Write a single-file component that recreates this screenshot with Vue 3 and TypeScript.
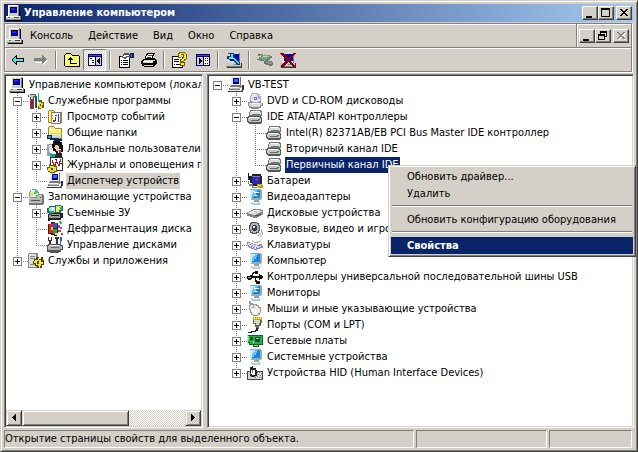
<script setup lang="ts">
import { ref } from 'vue'

type Layer = [fill: string, d: string]
type Guide = 'line' | 'tee' | 'elbow' | 'blank' | 'root'
interface Node {
  label: string
  icon: string
  guides: Guide[]
  expander?: '+' | '-'
  state?: 'inactive' | 'active'
}

const computer: Layer[] = [
  ['#808080', 'M2 0h11v11H2z'],
  ['#fff', 'M2 0h10v1H3v10H2z'],
  ['#d4d0c8', 'M3 1h9v10H3z'],
  ['#000', 'M4 2h7v6H4zM13 1h1v10h-1z'],
  ['#00b', 'M5 3h6v5H5z'],
  ['#22f', 'M5 3h4v2H5z'],
  ['#000', 'M1 15h14v1H1zM15 12h1v4h-1z'],
  ['#808080', 'M0 11h15v4H0z'],
  ['#d8d4cc', 'M0 11h14v3H0z'],
  ['#fff', 'M0 11h14v1H0z'],
  ['#0a0', 'M2 12h2v1H2z'],
  ['#404040', 'M8 12h5v1H8z'],
]
const drive: Layer[] = [
  ['#777', 'M3 1h11v1h1v5h-1v1H3V7H2V3h1z'],
  ['#ddd', 'M4 2h9v1h1v3H3V3h1z'],
  ['#fff', 'M4 2h8v1H4z'],
  ['#777', 'M5 5h8v1H5z'],
  ['#555', 'M1 7h13v1h1v6h-1v1H2v-1H1v-1H0V8h1z'],
  ['#c4c4c4', 'M2 8h11v1h1v4H2v-1H1V9h1z'],
  ['#fff', 'M2 8h10v1H2z'],
  ['#666', 'M4 11h8v1H4z'],
  ['#0b0', 'M11 10h2v1h-2z'],
]
const screen: Layer[] = [
  ['#9ab', 'M3 0h11v1h1v9h-1v1H4v-1H3z'],
  ['#d6e8f4', 'M3 1h2v9H3z'],
  ['#1686dc', 'M5 1h8v8H5z'],
  ['#63c4f6', 'M5 1h6v1h-1v2H9v2H7v2H5z'],
  ['#b8e8ff', 'M5 1h3v2H6v2H5z'],
  ['#8aa', 'M7 11h5v2H7z'],
  ['#bccad4', 'M4 13h10v1h-1v2H5v-1H4z'],
  ['#eef4f8', 'M5 13h7v1H5z'],
]
const toolbarPc: Layer[] = [
  ['#808080', 'M2 1h12v10H2z'],
  ['#e0ddd6', 'M2 1h11v10H2z'],
  ['#0000b8', 'M4 2h9v7H4z'],
  ['#333', 'M1 15h14v-4h1v5H1z'],
  ['#c8c8c0', 'M0 11h15v4H0z'],
  ['#808080', 'M8 12h5v1H8zM0 14h15v1H0z'],
]
const folder: Layer[] = [
  ['#a08820', 'M1 2h1V1h5v1h1v1h7v11H1z'],
  ['#f7ee7b', 'M2 2h5v1h1v1h6v9H2z'],
  ['#fffbc0', 'M2 4h12v1H3v8H2z'],
]

const icons: Record<string, Layer[]> = {
  computer,
  drive,
  screen,
  back: [
    ['#000', 'M6 3h1v3h7v4H7v3H6v-1H5v-1H4v-1H3V9H2V7h1V6h1V5h1V4h1z'],
    ['#4fe3ee', 'M6 5v2h7v2H6v2H5v-1H4V9H3V7h1V6h1V5z'],
  ],
  forward: [
    ['#fff', 'M10 4h1v1h1v1h1v1h1v1h1v1h-1v1h-1v1h-1v1h-1v1h-1v-2H2v-1h8z'],
    ['#808080', 'M9 3h1v1h1v1h1v1h1v1h1v1h-1v1h-1v1h-1v1h-1v1H9v-3H1V6h8z'],
  ],
  up: [
    ['#000', 'M1 2h1V1h5v1h1v1h7v1h1v11H1v-1H0V3h1z'],
    ['#ffff73', 'M2 2h5v1h1v1h7v10H1V3h1z'],
    ['#000', 'M6 5h1v1h1v1h1v1H7v3h6v1H6V8H4V7h1V6h1z'],
  ],
  panelLeft: [
    ['#000080', 'M1 2h14v12H1z'],
    ['#4848c8', 'M2 3h12v1H2z'],
    ['#fff', 'M2 5h6v8H2z'],
    ['#d4d0c8', 'M9 5h5v8H9z'],
    ['#000', 'M3 6h2v1H3zM5 8h2v1H5zM5 10h2v1H5zM12 6h1v6h-1v-1h-1v-1h-1V8h1V7h1z'],
  ],
  panelRight: [
    ['#000080', 'M1 2h14v12H1z'],
    ['#4848c8', 'M2 3h12v1H2z'],
    ['#d4d0c8', 'M2 5h6v8H2z'],
    ['#fff', 'M9 5h5v8H9z'],
    ['#000', 'M4 6h1v1h1v1h1v2H6v1H5v1H4z'],
    ['#000080', 'M10 6h1v1h-1zM12 6h1v1h-1zM10 8h1v1h-1zM12 8h1v1h-1zM10 11h1v1h-1zM12 11h1v1h-1z'],
  ],
  properties: [
    ['#000', 'M1 4h4V3h7v13H1z'],
    ['#fff', 'M2 5h9v10H2z'],
    ['#000', 'M3 8h1v1H3zM5 8h5v1H5zM3 10h1v1H3zM5 10h5v1H5zM3 12h1v1H3zM5 12h5v1H5z'],
    ['#555', 'M3 4h2V2h1V1h5v1h2v4h-2V5H9v1H8v1H6V6H4z'],
    ['#fff', 'M5 4h1V3h5v1H8v1H5z'],
    ['#0a246a', 'M12 1h4v5h-4z'],
    ['#4472c8', 'M13 2h1v3h-1z'],
  ],
  print: [
    ['#000', 'M6 1h8v1h-1v2h-1v2h2v1h1v1h1v4h-1v1h-1v1h-1v1H3v-1H1v-2H0V9h1V8h1V7h2V4h1V2h1z'],
    ['#fff', 'M7 2h5v1h-1v3H5V4h1V3h1z'],
    ['#444', 'M7 3h4v1H7zM6 5h4v1H6z'],
    ['#d4d0c8', 'M3 8h10v1H3zM2 10h10v1H2zM3 13h9v1H3z'],
    ['#fff', 'M2 9h10v1H2zM13 8h1v1h-1z'],
    ['#ffff40', 'M9 10h2v1H9z'],
    ['#000', 'M1 11h12v1H1z'],
  ],
  help: [
    ['#000', 'M0 4h8v1h3v11H0z'],
    ['#fff', 'M1 5h9v10H1z'],
    ['#000', 'M2 7h5v1H2zM2 9h5v1H2zM2 12h1v1H2zM4 12h4v1H4z'],
    ['#6b6300', 'M7 0h6v1h1v1h1v5h-1v1h-1v1h-1v1H8V7h2V6h1V3H9v3H6V1h1z'],
    ['#ffec28', 'M8 1h5v1h1v5h-2v2H9V8h1V7h1V6h1V2H9v3H7V2h1z'],
    ['#6b6300', 'M8 10h5v4H8z'],
    ['#ffec28', 'M9 11h3v2H9z'],
  ],
  scan: [
    ...toolbarPc,
    ['#063f66', 'M2 1h6v1h1v4h1v1h1v1h1v1h1v1h1v3h-3v-1h-1v-1H9v-1H8V9H7V8H3V7H1V4h3V2H2z'],
    ['#62d8ff', 'M5 2h2v4h2v1h1v1h1v1h1v1h1v2h-1v-1h-1v-1h-1V9H9V8H8V7H3V5h2z'],
    ['#fff', 'M6 5h1v1h1v1H7V6H6z'],
  ],
  uninstall: [
    ['#6a7468', 'M1 2h5v1h7v1h2v2h-2v2h-2v1h4v1h1v3h-1v1h-3v-1H9v-1H7V9H3V8H0V7h2V5h2V4H1z'],
    ['#75a67a', 'M2 2h4v1h6v1h2v1h-2v2H9v1H5V7H3V5h2V4H2z'],
    ['#c8d8c4', 'M6 4h5v1H6z'],
    ['#9a9688', 'M9 10h6v2h-4v-1H9zM7 8h3v1H7z'],
    ['#a33', 'M1 2h2v1H1z'],
  ],
  remove: [
    ...toolbarPc,
    ['#880010', 'M0 1h3l5 5 5-5h3l-6 7 5 6v1h-2l-5-5-5 5H1v-2l5-5z'],
  ],
  tools: [
    ['#555', 'M0 2h2V1h6v2h1v2H8V4H6v12H2V4H0z'],
    ['#c8d0d0', 'M1 2h6v1H5v3H3V4H1z'],
    ['#c01020', 'M3 7h2v8H3z'],
    ['#064', 'M7 4h2v11H7z'],
    ['#18c0b8', 'M10 0h1v9h-1z'],
    ['#6b5a00', 'M11 7h3v2h2v6h-3v1h-3v-5h1z'],
    ['#f5d638', 'M11 9h2v1h2v2h-1v3h-3v-2h-1v-2h1z'],
    ['#554400', 'M12 11h1v2h-1z'],
  ],
  events: [
    ...folder,
    ['#777', 'M4 3h10v12H4z'],
    ['#fff', 'M5 4h8v10H5z'],
    ['#c02020', 'M8 6h2v1H8zM6 11h2v2H6z'],
    ['#3030c0', 'M11 5h1v8h-1zM8 8h1v4H8z'],
    ['#c89020', 'M4 3h1v12H4zM5 6h1v1H5zM5 9h1v1H5z'],
  ],
  shared: [
    ...folder,
    ['#d8d060', 'M3 8h12v1H3z'],
    ['#c6d8e8', 'M5 10h7v1h2v2H5z'],
    ['#0b2258', 'M0 10h5v3h7v1h3v2H7v-1H3v-1H0z'],
    ['#5c86bd', 'M1 11h3v2H1z'],
  ],
  users: [
    ['#9aa0a0', 'M0 3h7v12H0z'],
    ['#d8dcd8', 'M2 4h5v7H2z'],
    ['#111', 'M6 0h7v1h2v3h1v7h-2V8h-3v4H8v-2H6V7H5V3h1z'],
    ['#f1c8a8', 'M8 4h3v1h1v5H9V8H8V7H7V6h1z'],
    ['#fff', 'M3 9h3v2h3v2H5v-1H3z'],
    ['#08a5a0', 'M3 13h10v3H3z'],
    ['#222', 'M9 12h6v4H8v-2h1z'],
    ['#d02030', 'M12 9h2v3h-2z'],
  ],
  logs: [
    ['#333', 'M3 0h13v14H3z'],
    ['#fff', 'M4 1h11v12H4z'],
    ['#c01818', 'M5 3h1v2h1v2h1V5h1V3h1v2h1v2h1V4h1V2h1v3h-1v4h-2V7h-1V6H9v3H7V7H6V6H5z'],
    ['#2020c0', 'M5 8h2v1H5zM8 2h2v1H8zM12 6h3v1h-3z'],
    ['#6b5a00', 'M2 7h2v1h2V7h2v2h2v6H8v1H3v-1H1v-2H0v-3h2z'],
    ['#f2dd38', 'M3 9h4v1h2v4H7v1H3v-1H1v-3h2z'],
    ['#443600', 'M4 11h2v2H4z'],
  ],
  deviceManager: [
    ['#777', 'M3 0h10v9H3z'],
    ['#e8e8e8', 'M3 0h9v8H3z'],
    ['#000070', 'M5 1h6v6H5z'],
    ['#2870ff', 'M6 2h4v3H6z'],
    ['#333', 'M0 14h12v1H0zM14 8h2v5h-2z'],
    ['#777', 'M2 9h12v1h-1v1h-1v2H1v-2h1z'],
    ['#b8c0c0', 'M2 10h10v2H2z'],
    ['#f4f4f4', 'M2 10h9v1H2zM1 13h10v1H1z'],
    ['#555', 'M13 13h2v2h-3v-1h1z'],
  ],
  storage: [
    ['#777', 'M1 5h14v1h1v9h-1v1H1z'],
    ['#b8b8b4', 'M1 6h13v8H1z'],
    ['#f0f0ea', 'M1 6h12v1H1z'],
    ['#555', 'M3 11h9v1H3z'],
    ['#8a9a94', 'M2 1h2V0h4v1h2v2h1v4H9v2H3V7H1V3h1z'],
    ['#d8efe8', 'M3 1h5v1h2v4H8v2H3V6H2V3h1z'],
    ['#39cf48', 'M7 1h2v1h1v2H8v1H6V3h1z'],
    ['#f0dc30', 'M2 4h3v2H3v1H2z'],
    ['#fff', 'M5 4h1v1H5z'],
    ['#0a0', 'M12 8h1v1h-1z'],
  ],
  removable: [
    ['#222', 'M2 7h12v1h2v5h-2v2H3v1H1V9h1z'],
    ['#9a9a94', 'M2 9h11v4H2z'],
    ['#111', 'M4 10h8v1H4z'],
    ['#276b70', 'M2 1h6V0h6v1h2v5h-2v2H5v2H2V8H0V3h2z'],
    ['#abecd8', 'M3 2h5v5H4V6H2V3h1z'],
    ['#e7e85a', 'M9 1h5v1h1v3h-3v2H9z'],
    ['#17be55', 'M3 6h4v2H3zM13 2h2v3h-2z'],
    ['#fff', 'M5 3h2v2H5zM10 3h2v1h-2z'],
  ],
  defrag: [
    ['#611', 'M1 3h3V1h4v1h3v10h-1v3H7v-1H4v-1H1z'],
    ['#d02c28', 'M2 3h4v9H2z'],
    ['#2858d0', 'M6 2h4v5H6z'],
    ['#18a848', 'M6 8h4v5H6z'],
    ['#f0d030', 'M4 6h2v3H4zM8 12h2v2H8z'],
    ['#b040d0', 'M11 4h2v2h2v2h-2V7h-2z'],
    ['#30bc50', 'M12 0h2v1h1v2h-2V2h-1z'],
    ['#d03838', 'M11 9h3v2h-3zM14 12h2v2h-2z'],
  ],
  diskManagement: [
    ['#333', 'M1 0h1v3h2V0h1v4H4v5H2V4H1zM8 0h4v2h-1v7H9V2H8z'],
    ['#1565c8', 'M13 0h2v4h-1v5h-1z'],
    ['#555', 'M1 7h13v1h2v5h-2v2h-2v1H3v-1H0V8h1z'],
    ['#b4b4ae', 'M2 8h11v1h2v3h-2v1H1V9h1z'],
    ['#eee', 'M2 8h10v1H2z'],
    ['#666', 'M4 10h8v1H4z'],
  ],
  services: [
    ['#888', 'M1 0h9v15H0V1h1z'],
    ['#dededa', 'M1 1h7v13H1z'],
    ['#888', 'M2 3h5v1H2zM2 5h5v1H2zM2 11h5v1H2z'],
    ['#4e4500', 'M6 6h2V4h3v2h2V4h2v3h1v5h-2v3h-2v-2h-1v2H9v-2H7v-2H5V8h1z'],
    ['#f2e24a', 'M7 7h3V5h1v2h2v2h2v2h-2v2h-3v-1H8v-2H6V8h1z'],
    ['#554600', 'M9 8h2v3H9z'],
  ],
  optical: [
    ['#888', 'M1 9h2V8h11v2h2v3h-2v2h-2v1H4v-1H2v-2H1z'],
    ['#d8dadd', 'M2 10h13v2h-2v2H4v-1H2z'],
    ['#fff', 'M3 10h9v1H3z'],
    ['#a9a9c0', 'M5 0h6v1h2v2h1v6h-2v1H5V9H4V8H3V3h1V1h1z'],
    ['#e5e7f5', 'M5 1h6v1h2v6h-2v1H6V8H4V3h1z'],
    ['#b9a6ed', 'M10 2h2v1h1v3h-3V5h1V4h-1z'],
    ['#77a', 'M7 4h3v3H7z'],
    ['#fff', 'M8 5h1v1H8z'],
  ],
  battery: [
    ['#222', 'M1 0h1v3h3V1h9v2h1v8h-2v2H5v-3H3V7H1z'],
    ['#1b2fb8', 'M5 3h8v8H6v-1H5z'],
    ['#6686ff', 'M5 3h8v1H5z'],
    ['#e02020', 'M9 5h1v1h1v1h-1v1H9V7H8V6h1z'],
    ['#777', 'M1 8h1v3h4v3h4v1H5v-2H2v-2H1z'],
    ['#b6a318', 'M10 11h5v1h1v3h-5v-1h-1z'],
    ['#ffe940', 'M11 12h3v1h-3z'],
  ],
  display: [
    ...screen,
    ['#fff', 'M7 3h5v1H7zM7 6h4v1H7z'],
    ['#155', 'M10 5h2v1h-2z'],
  ],
  disk: [
    ['#888', 'M0 7h2V6h2V5h2V4h8v1h2v5h-2v1h-2v1h-2v1H6v-1H3v-1H0z'],
    ['#d8dad8', 'M1 7h2V6h3V5h7v1h2v1h-2v1h-2v1H9v1H5V9H2V8H1z'],
    ['#fff', 'M6 5h6v1H6zM3 7h4v1H3z'],
    ['#555', 'M8 10h4V9h2v1h-2v1H8z'],
    ['#0a0', 'M3 10h1v1H3z'],
  ],
  sound: [
    ['#555', 'M4 1h6v1h2v2h1v6h-1v2h-2v1H5v-1H3v-2H2V4h1V2h1z'],
    ['#b2b4b8', 'M5 2h5v1h1v2h1v4h-1v2H9v1H6v-1H4V9H3V5h1V3h1z'],
    ['#383b42', 'M6 4h3v1h1v4H9v1H6V9H5V5h1z'],
    ['#eee', 'M6 5h2v2H6z'],
    ['#a6b5e8', 'M14 8h1v4h-1v2h-2v1h-2v-1h2v-2h2zM15 11h1v3h-1v1h-1v1h-1v-1h1v-1h1z'],
  ],
  keyboard: [
    ['#888bb0', 'M0 5h3v1h3v1h3v1h3V7h3v2h1v2h-3v1h-3v1H7v-1H4v-1H2v-1H1V8H0z'],
    ['#d9daf0', 'M1 6h3v1h3v1h3v1h4v1h-2v1h-3v1H7v-1H5v-1H3V9H2V8H1z'],
    ['#8486af', 'M3 7h1v1H3zM5 8h1v1H5zM7 9h1v1H7zM9 10h1v1H9zM4 9h1v1H4zM6 10h1v1H6z'],
    ['#aeb1d0', 'M5 4h2v1h3V4h4v1h-3v1H7V5H5z'],
  ],
  usb: [
    ['#111', 'M0 7h3V6h2V4h1V3h2V2h3v3H8V4H7v1H6v2h6V5h1v1h2v1h1v2h-1v1h-2v1h-1V9H9v2h1v1h3v3H9v-2H8V9H5v1H4v1H1v-1H0z'],
    ['#aaa', 'M1 8h3v1H1z'],
  ],
  mouse: [
    ['#999', 'M2 0h2v2h2v1h4v1h2v2h2v6h-1v2h-2v1H6v-1H4v-2H3V9H2V4h1V3H2z'],
    ['#e9ece4', 'M4 4h5v1h2v2h2v5h-2v2H6v-1H5v-2H4V8H3V5h1z'],
    ['#fff', 'M5 8h4v1h2v2H9v2H7v-2H5z'],
    ['#aaa', 'M6 4h1v2h1v1H5V6h1z'],
  ],
  port: [
    ['#c1ae26', 'M6 0h9v3H6z'],
    ['#fff06a', 'M7 0h1v2H7zM9 0h1v2H9zM11 0h1v2h-1zM13 0h1v2h-1z'],
    ['#666', 'M6 3h9v3h-1v3h-2v3h-1v1H9v-3H8V7H6z'],
    ['#d6d6d0', 'M7 3h6v3h-1v2H9V6H7z'],
    ['#222', 'M9 11h2v3H9v1H5v1H1v-1h3v-1h4v-1h1z'],
  ],
  network: [
    ['#063', 'M0 2h16v10h-4v2H6v-2H2v-2H0z'],
    ['#2fae42', 'M1 3h14v8H3V9H1z'],
    ['#053', 'M3 4h3v3H3zM8 4h5v5H8z'],
    ['#8be07c', 'M1 3h1v4H1zM6 8h1v2H6zM9 5h3v1H9z'],
    ['#d8c828', 'M7 12h4v1H7z'],
    ['#ddd', 'M0 1h1v11H0z'],
  ],
  hid: [
    ['#444', 'M0 6h16v9H0z'],
    ['#d6d6d2', 'M1 7h14v7H1z'],
    ['#777', 'M10 7h1v1h-1zM12 7h1v1h-1zM14 8h1v1h-1zM11 9h1v1h-1zM13 10h1v1h-1zM10 11h1v1h-1zM12 12h1v1h-1zM8 12h1v1H8zM14 12h1v1h-1z'],
    ['#222', 'M3 2h2V1h1v2h3v2h1v6H8v1H4v-1H3z'],
    ['#fff', 'M4 5h4v5H5V9H4z'],
    ['#777', 'M5 5h1v3H5z'],
  ],
}

const leftTree: Node[] = [
  { label: 'Управление компьютером (локальным)', icon: 'computer', guides: [] },
  { label: 'Служебные программы', icon: 'tools', guides: ['tee'], expander: '-' },
  { label: 'Просмотр событий', icon: 'events', guides: ['line', 'tee'], expander: '+' },
  { label: 'Общие папки', icon: 'shared', guides: ['line', 'tee'], expander: '+' },
  { label: 'Локальные пользователи', icon: 'users', guides: ['line', 'tee'], expander: '+' },
  { label: 'Журналы и оповещения производительности', icon: 'logs', guides: ['line', 'tee'], expander: '+' },
  { label: 'Диспетчер устройств', icon: 'deviceManager', guides: ['line', 'elbow'], state: 'inactive' },
  { label: 'Запоминающие устройства', icon: 'storage', guides: ['tee'], expander: '-' },
  { label: 'Съемные ЗУ', icon: 'removable', guides: ['line', 'tee'], expander: '+' },
  { label: 'Дефрагментация диска', icon: 'defrag', guides: ['line', 'tee'] },
  { label: 'Управление дисками', icon: 'diskManagement', guides: ['line', 'elbow'] },
  { label: 'Службы и приложения', icon: 'services', guides: ['elbow'], expander: '+' },
]

const category = (label: string, icon: string, last = false): Node => ({
  label,
  icon,
  guides: ['blank', last ? 'elbow' : 'tee'],
  expander: '+',
})

const deviceTree: Node[] = [
  { label: 'VB-TEST', icon: 'deviceManager', guides: ['root'], expander: '-' },
  category('DVD и CD-ROM дисководы', 'optical'),
  { label: 'IDE ATA/ATAPI контроллеры', icon: 'drive', guides: ['blank', 'tee'], expander: '-' },
  { label: 'Intel(R) 82371AB/EB PCI Bus Master IDE контроллер', icon: 'drive', guides: ['blank', 'line', 'tee'] },
  { label: 'Вторичный канал IDE', icon: 'drive', guides: ['blank', 'line', 'tee'] },
  { label: 'Первичный канал IDE', icon: 'drive', guides: ['blank', 'line', 'elbow'], state: 'active' },
  category('Батареи', 'battery'),
  category('Видеоадаптеры', 'display'),
  category('Дисковые устройства', 'disk'),
  category('Звуковые, видео и игровые устройства', 'sound'),
  category('Клавиатуры', 'keyboard'),
  category('Компьютер', 'screen'),
  category('Контроллеры универсальной последовательной шины USB', 'usb'),
  category('Мониторы', 'display'),
  category('Мыши и иные указывающие устройства', 'mouse'),
  category('Порты (COM и LPT)', 'port'),
  category('Сетевые платы', 'network'),
  category('Системные устройства', 'screen'),
  category('Устройства HID (Human Interface Devices)', 'hid', true),
]

const panes = [
  { name: 'console', nodes: leftTree, scroll: true },
  { name: 'devices', nodes: deviceTree, scroll: false },
]
const menus = ['Консоль', 'Действие', 'Вид', 'Окно', 'Справка']
const toolGroups = [
  [['back', 'Назад'], ['forward', 'Вперед']],
  [['up', 'Вверх'], ['panelLeft', 'Дерево консоли']],
  [['properties', 'Свойства'], ['print', 'Печать']],
  [['help', 'Справка'], ['panelRight', 'Панель действий']],
  [['scan', 'Обновить конфигурацию']],
  [['uninstall', 'Отключить'], ['remove', 'Удалить']],
]
const treeShown = ref(true)

function runTool(icon: string) {
  if (icon === 'panelLeft') treeShown.value = !treeShown.value
}
</script>

<template>
  <main class="window">
    <header class="title">
      <svg class="icon" viewBox="0 0 16 16"><path v-for="(l, i) in icons.computer" :key="i" :fill="l[0]" :d="l[1]" /></svg>
      <h1>Управление компьютером</h1>
      <button class="caption" aria-label="Свернуть"><svg viewBox="0 0 12 10"><path d="M2 8h6v2H2z" /></svg></button>
      <button class="caption" aria-label="Развернуть"><svg viewBox="0 0 12 10"><path fill-rule="evenodd" d="M1 0h9v9H1zM2 2v6h7V2z" /></svg></button>
      <button class="caption close" aria-label="Закрыть"><svg viewBox="0 0 12 10"><path d="M2 1h2v1h1v1h2V2h1V1h2v1H9v1H8v1H7v1h1v1h1v1h1v1H8V7H7V6H5v1H4v1H2V7h1V6h1V5h1V4H4V3H3V2H2z" /></svg></button>
    </header>

    <div class="rebar">
      <div class="menu-row">
        <svg class="icon" viewBox="0 0 16 16"><path v-for="(l, i) in icons.computer" :key="i" :fill="l[0]" :d="l[1]" /></svg>
        <nav>
          <button v-for="m in menus" :key="m">{{ m }}</button>
        </nav>
        <div class="child-controls">
          <button class="caption" aria-label="Свернуть окно"><svg viewBox="0 0 12 10"><path d="M2 8h6v2H2z" /></svg></button>
          <button class="caption" aria-label="Восстановить окно"><svg viewBox="0 0 12 10"><path fill-rule="evenodd" d="M3 0h7v6H8v3H1V3h2zM4 2v1h4v2h1V2zM2 5v3h5V5z" /></svg></button>
          <button class="caption close" aria-label="Закрыть окно" disabled><svg viewBox="0 0 12 10"><path d="M2 1h2v1h1v1h2V2h1V1h2v1H9v1H8v1H7v1h1v1h1v1h1v1H8V7H7V6H5v1H4v1H2V7h1V6h1V5h1V4H4V3H3V2H2z" /></svg></button>
        </div>
      </div>
      <div class="toolbar">
        <div v-for="(group, g) in toolGroups" :key="g" class="group">
          <button
            v-for="[icon, label] in group"
            :key="icon"
            :aria-label="label"
            :class="{ pressed: icon === 'panelLeft' && treeShown }"
            @click="runTool(icon)"
          >
            <svg class="icon" viewBox="0 0 16 16"><path v-for="(l, i) in icons[icon]" :key="i" :fill="l[0]" :d="l[1]" /></svg>
          </button>
        </div>
      </div>
    </div>

    <div class="panes" :class="{ single: !treeShown }">
      <template v-for="pane in panes" :key="pane.name">
        <section v-if="pane.name === 'devices' || treeShown" class="pane" :class="pane.name">
          <ul role="tree">
            <li v-for="node in pane.nodes" :key="node.label" role="treeitem">
              <span v-for="(guide, i) in node.guides" :key="i" class="guide" :class="guide">
                <button v-if="node.expander && i === node.guides.length - 1" class="expander" :class="{ closed: node.expander === '+' }" :aria-label="node.label"></button>
              </span>
              <svg class="icon" viewBox="0 0 16 16"><path v-for="(l, i) in icons[node.icon]" :key="i" :fill="l[0]" :d="l[1]" /></svg>
              <span class="label" :class="node.state">{{ node.label }}</span>
            </li>
          </ul>
          <div v-if="pane.scroll" class="scrollbar">
            <button class="raised" aria-label="Прокрутить влево"><svg viewBox="0 0 12 12"><path d="M7 2h1v7H7V8H6V7H5V6H4V5h1V4h1V3h1z" /></svg></button>
            <div class="thumb raised"></div>
            <button class="raised right" aria-label="Прокрутить вправо"><svg viewBox="0 0 12 12"><path d="M4 2h1v1h1v1h1v1h1v1H7v1H6v1H5v1H4z" /></svg></button>
          </div>
        </section>
      </template>
    </div>

    <footer class="status">
      <span>Открытие страницы свойств для выделенного объекта.</span>
      <span></span>
      <span></span>
    </footer>

    <div class="context" role="menu">
      <button role="menuitem">Обновить драйвер...</button>
      <button role="menuitem">Удалить</button>
      <hr />
      <button role="menuitem">Обновить конфигурацию оборудования</button>
      <hr />
      <button role="menuitem" class="chosen">Свойства</button>
    </div>
  </main>
</template>

<style>
body {
  margin: 0;
  background: #d4d0c8;
}
</style>

<style scoped>
.window {
  position: relative;
  box-sizing: border-box;
  display: flex;
  flex-direction: column;
  min-height: 100vh;
  padding: 3px;
  border: 1px solid;
  border-color: #d4d0c8 #404040 #404040 #d4d0c8;
  box-shadow: inset 1px 1px #fff, inset -1px -1px #808080;
  background: #d4d0c8;
  color: #000;
  font: 11px/16px "DejaVu Sans Condensed", "DejaVu Sans", sans-serif;
  overflow: hidden;
}
button {
  font: inherit;
  color: inherit;
  border: 0;
  margin: 0;
  padding: 0;
  background: transparent;
}
svg {
  display: block;
  flex: none;
  shape-rendering: crispEdges;
}
.icon {
  width: 16px;
  height: 16px;
}
.title {
  display: flex;
  align-items: center;
  height: 18px;
  padding: 0 2px;
  background: linear-gradient(90deg, #0a246a, #a6caf0);
  color: #fff;
}
h1 {
  flex: 1;
  margin: 0 0 0 2px;
  font-size: 11px;
  font-weight: bold;
}
.caption {
  display: flex;
  box-sizing: border-box;
  width: 16px;
  height: 14px;
  padding: 1px;
  border: 1px solid;
  border-color: #fff #404040 #404040 #fff;
  box-shadow: inset -1px -1px #808080;
  background: #d4d0c8;
}
.caption svg {
  width: 12px;
  height: 10px;
}
.caption.close {
  margin-left: 2px;
}
.caption:disabled svg {
  fill: #808080;
  filter: drop-shadow(1px 1px #fff);
}
.rebar {
  margin: 1px 2px 0 0;
  border: 1px solid #808080;
  box-shadow: 1px 1px #fff;
}
.menu-row {
  display: flex;
  align-items: center;
  height: 23px;
  border-bottom: 1px solid #808080;
  box-shadow: inset 1px 1px #fff;
  padding-left: 2px;
}
nav {
  display: flex;
  flex: 1;
}
nav button {
  padding: 0 8px 0 7px;
}
.child-controls {
  display: flex;
  align-items: center;
  align-self: stretch;
  padding: 0 2px;
  border-left: 1px solid #808080;
  box-shadow: inset 1px 1px #fff;
}
.toolbar {
  display: flex;
  padding: 1px 1px 0;
  box-shadow: inset 1px 1px #fff;
}
.group {
  display: flex;
}
.group + .group::before {
  content: "";
  width: 1px;
  height: 18px;
  margin: 2px 3px;
  background: #808080;
  border-right: 1px solid #fff;
}
.toolbar button {
  display: flex;
  align-items: center;
  justify-content: center;
  box-sizing: border-box;
  width: 23px;
  height: 22px;
}
.toolbar .pressed {
  border: 1px solid;
  border-color: #808080 #fff #fff #808080;
  background: repeating-conic-gradient(#fff 0 25%, #d4d0c8 0 50%) 0 0 / 2px 2px;
}
.panes {
  flex: 1;
  display: grid;
  grid-template-columns: 199px minmax(0, 1fr);
  gap: 4px;
  margin-top: 2px;
}
.panes.single {
  grid-template-columns: minmax(0, 1fr);
}
.pane {
  display: flex;
  flex-direction: column;
  min-width: 0;
  border: 1px solid;
  border-color: #808080 #fff #fff #808080;
  box-shadow: inset 1px 1px #404040, inset -1px -1px #d4d0c8;
  padding: 1px;
  background: #fff;
  overflow: hidden;
}
ul {
  flex: 1;
  margin: 0;
  padding: 1px 0 0;
  list-style: none;
  overflow: hidden;
}
.console ul {
  padding-left: 3px;
}
li {
  display: flex;
  height: 16px;
  white-space: nowrap;
}
.guide {
  position: relative;
  flex: none;
  width: 19px;
  height: 16px;
}
.line,
.tee,
.elbow {
  background: repeating-linear-gradient(#808080 0 1px, transparent 1px 2px) 8px 0 / 1px 16px no-repeat;
}
.elbow {
  background-size: 1px 8px;
}
.tee::after,
.elbow::after,
.root::after {
  content: "";
  position: absolute;
  left: 8px;
  right: 0;
  top: 8px;
  height: 1px;
  background: repeating-linear-gradient(90deg, #808080 0 1px, transparent 1px 2px);
}
.expander {
  position: absolute;
  z-index: 1;
  left: 4px;
  top: 4px;
  width: 9px;
  height: 9px;
  border: 1px solid #808080;
  background: linear-gradient(#000, #000) 1px 3px / 5px 1px no-repeat, #fff;
}
.expander.closed {
  background: linear-gradient(#000, #000) 1px 3px / 5px 1px no-repeat, linear-gradient(#000, #000) 3px 1px / 1px 5px no-repeat, #fff;
}
.label {
  margin-left: 3px;
  padding: 0 1px;
}
.label.inactive {
  background: #d4d0c8;
}
.label.active {
  background: #0a246a;
  color: #fff;
}
.raised {
  box-sizing: border-box;
  height: 16px;
  padding: 1px;
  border: 1px solid;
  border-color: #d4d0c8 #404040 #404040 #d4d0c8;
  box-shadow: inset 1px 1px #fff, inset -1px -1px #808080;
  background: #d4d0c8;
}
.scrollbar {
  display: flex;
  background: repeating-conic-gradient(#fff 0 25%, #d4d0c8 0 50%) 0 0 / 2px 2px;
}
.scrollbar button {
  width: 16px;
}
.scrollbar svg {
  width: 12px;
  height: 12px;
}
.thumb {
  width: 55%;
}
.scrollbar .right {
  margin-left: auto;
}
.status {
  display: grid;
  grid-template-columns: minmax(0, 1fr) 131px 83px;
  gap: 2px;
  margin: 2px 2px 0 0;
}
.status span {
  height: 16px;
  border: 1px solid;
  border-color: #808080 #fff #fff #808080;
  white-space: nowrap;
  overflow: hidden;
}
.context {
  position: absolute;
  left: 387px;
  top: 164px;
  box-sizing: border-box;
  display: flex;
  flex-direction: column;
  min-width: 248px;
  padding: 2px;
  border: 1px solid;
  border-color: #d4d0c8 #404040 #404040 #d4d0c8;
  box-shadow: inset 1px 1px #fff, inset -1px -1px #808080;
  background: #d4d0c8;
}
.context button {
  height: 17px;
  padding: 0 16px;
  text-align: left;
}
.context .chosen {
  background: #0a246a;
  color: #fff;
  font-weight: bold;
}
hr {
  box-sizing: border-box;
  width: calc(100% - 2px);
  height: 2px;
  margin: 3px 1px 4px;
  border: 0;
  border-top: 1px solid #808080;
  border-bottom: 1px solid #fff;
}
</style>
